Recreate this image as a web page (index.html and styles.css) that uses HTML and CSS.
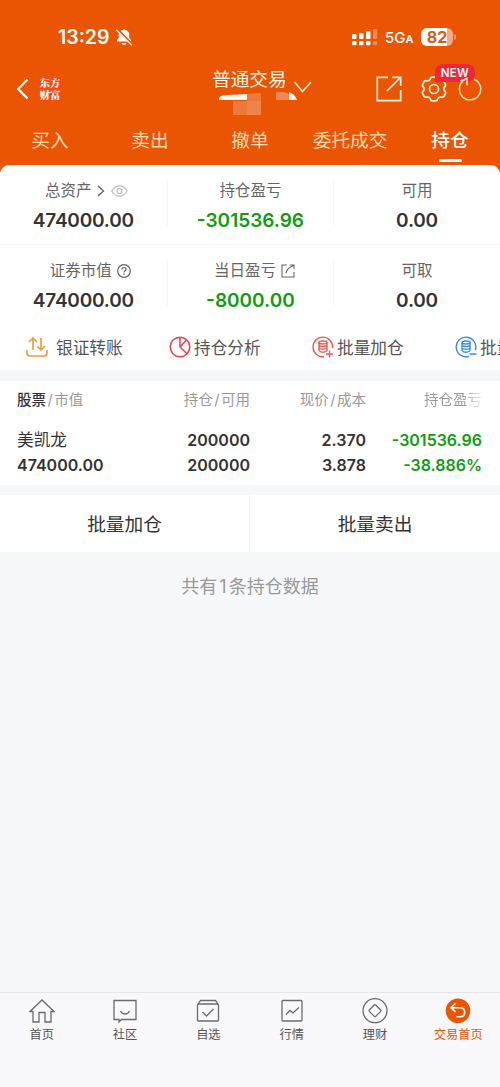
FILE: index.html
```html
<!DOCTYPE html>
<html lang="zh-CN">
<head>
<meta charset="utf-8">
<title>普通交易</title>
<link rel="stylesheet" href="styles.css">
</head>
<body>
<div class="app">
  <header class="top">
    <div class="status">
      <span class="time">13:29</span>
      <svg class="bell" width="18" height="18" viewBox="0 0 18 18"><path d="M2 13.600V12l1.700-2.300V7A5 5 0 0 1 8 2Q9 .4 10.200 2a5 5 0 0 1 4 5v2.700l1.800 2.300v1.600zM6.400 15h5.200q-.5 2-2.600 2t-2.600-2z" fill="#fff"/><path d="M2.200 1.200l15 15.400" stroke="#ea5504" stroke-width="2.600"/><path d="M1.300 1.700l15.400 15.400" stroke="#fff" stroke-width="1.300"/></svg>
      <svg class="signal" width="26" height="18" viewBox="0 0 26 18" fill="#fff"><rect x="0" y="6" width="4.500" height="5" rx="1"/><rect x="7" y="5" width="4.500" height="6" rx="1"/><rect x="14" y="3" width="4.500" height="8" rx="1"/><rect x="21" y="1" width="4.200" height="10" rx="1" opacity=".3"/><rect x="0" y="13" width="4.500" height="4.300" rx="1"/><rect x="7" y="13" width="4.500" height="4.300" rx="1"/><rect x="14" y="13" width="4.500" height="4.300" rx="1"/><rect x="21" y="13" width="4.200" height="4.300" rx="1" opacity=".3"/></svg>
      <span class="net">5G<small>A</small></span>
      <span class="battery">82</span><i class="battery-tip"></i>
    </div>
    <div class="bar">
      <svg class="back" width="14" height="22" viewBox="0 0 14 22"><path d="M11.500 1.500L2.200 11l9.300 9.500" fill="none" stroke="#fff" stroke-width="2.300"/></svg>
      <span class="logo"><span>东方</span><span>财富</span></span>
      <div class="title">
        <span>普通交易</span>
        <svg class="caret" width="20" height="14" viewBox="0 0 20 14"><path d="M1.500 2L9.500 11.500 18 2" fill="none" stroke="#ffe9d4" stroke-width="1.500"/></svg>
        <svg class="account" width="80" height="28" viewBox="0 0 80 28"><path d="M0 8Q-1 3 9 3L28 2v6z" fill="#fff8ee"/><path d="M28 2l14-1v22H28zM14 9h14v14H14z" fill="#ee7a3a"/><path d="M28 9h14v14H28z" fill="#f0834a"/><path d="M57 8V0h7q4 0 7 3v5z" fill="#f18752"/><path d="M70 0q6 2 8 8h-8z" fill="#fff2e3"/></svg>
      </div>
      <svg class="share" width="26" height="26" viewBox="0 0 26 26" fill="none" stroke="#fff0dc" stroke-width="1.700"><path d="M12 1.300H1.300v23.400h23.400V14M11 15L24 2M16 1.300h8.700V10"/></svg>
      <div class="gear">
        <svg width="26" height="26" viewBox="0 0 26 26" fill="none" stroke="#fff0dc" stroke-width="1.700"><path d="M9 3.600Q9.600 1.200 11 1.200h4Q16.400 1.200 17 3.600q.6 1.500 3.100 1.200 2-.4 2.900 1l1.400 2.700q.7 1.300-.8 2.600-1.400 1.900 0 3.800 1.500 1.300.8 2.600L23 20.200q-.9 1.400-2.900 1-2.500-.3-3.100 1.200-.6 2.400-2 2.400h-4q-1.400 0-2-2.400-.6-1.500-3.100-1.200-2 .4-2.900-1l-1.400-2.700q-.7-1.300.8-2.600 1.400-1.900 0-3.800-1.500-1.300-.8-2.600L3 5.800q.9-1.400 2.900-1Q8.400 5.100 9 3.600z"/><circle cx="13" cy="13" r="4.500"/></svg>
        <span class="new">NEW</span>
      </div>
      <svg class="refresh" width="24" height="26" viewBox="0 0 24 26" fill="none" stroke="#ffdcae" stroke-width="1.500"><path d="M16 3.200a10.700 10.700 0 1 1-9 .5M2.500 5L9 2.300v7"/></svg>
    </div>
    <nav class="tabs"><span>买入</span><span>卖出</span><span>撤单</span><span>委托成交</span><span class="on">持仓</span></nav>
  </header>

  <section class="assets">
    <div class="stats">
      <div class="stat"><div class="label first">总资产
        <svg width="8" height="12" viewBox="0 0 8 12"><path d="M1 1l5.500 5L1 11" fill="none" stroke="#666" stroke-width="1.400"/></svg>
        <svg class="eye" width="17" height="12" viewBox="0 0 17 12" fill="none" stroke="#bbb" stroke-width="1.200"><path d="M.8 6Q4 .8 8.500.8T16.200 6Q13 11.200 8.500 11.200T.8 6z"/><circle cx="8.500" cy="6" r="2.500"/></svg></div><b>474000.00</b></div>
      <div class="stat"><div class="label">持仓盈亏</div><b class="green">-301536.96</b></div>
      <div class="stat"><div class="label">可用</div><b>0.00</b></div>
    </div>
    <div class="stats">
      <div class="stat"><div class="label help">证券市值
        <svg width="14" height="14" viewBox="0 0 14 14" fill="none" stroke="#666" stroke-width="1.200"><circle cx="7" cy="7" r="6.300"/><path d="M4.900 5.500Q4.900 3.500 7 3.500t2.100 1.800Q9.100 6.300 7.900 6.900 7 7.400 7 8.400M7 9.600v1.300"/></svg></div><b>474000.00</b></div>
      <div class="stat"><div class="label today">当日盈亏
        <svg class="out" width="14" height="14" viewBox="0 0 14 14" fill="none" stroke="#666" stroke-width="1.100"><path d="M6 1H1v12h12V8M5 9.200Q5.500 4.500 12.500 1.500M8.800 1H13v4.300"/></svg></div><b class="green">-8000.00</b></div>
      <div class="stat"><div class="label">可取</div><b>0.00</b></div>
    </div>
    <div class="tools">
      <div class="tool"><svg class="transfer" width="22" height="22" viewBox="0 0 22 22" fill="none" stroke="#e9a13c" stroke-width="1.700"><path d="M7 14V2M3 6l4-4 4 4M15 2v12M11.500 10.500L15 14l4-4M1 14v3q0 3 3 3h14q3 0 3-3v-3"/></svg>银证转账</div>
      <div class="tool"><svg width="22" height="22" viewBox="0 0 22 22" fill="none" stroke="#e8414f" stroke-width="1.500"><circle cx="11" cy="11" r="9.800"/><path d="M11 1.200V11l7 6.800M11 11l6.500-7"/></svg>持仓分析</div>
      <div class="tool"><svg width="22" height="22" viewBox="0 0 22 22" fill="none" stroke="#e95c55" stroke-width="1.400"><path d="M12 20.700A9.800 9.800 0 1 1 20.600 12"/><ellipse cx="11" cy="6.500" rx="4" ry="1.500"/><path d="M7 6.500v8q1 1.800 4 1.800t4-1.800v-8M7 9q1 1.500 4 1.500T15 9M7 11.800q1 1.500 4 1.500t4-1.500M14 18h7M17.500 14.500v7"/></svg>批量加仓</div>
      <div class="tool"><svg width="22" height="22" viewBox="0 0 22 22" fill="none" stroke="#378ee5" stroke-width="1.400"><path d="M14 20.300A9.800 9.800 0 1 1 20.300 14"/><ellipse cx="11" cy="6.500" rx="4" ry="1.500"/><path d="M7 6.500v8q1 1.800 4 1.800t4-1.800v-8M7 9q1 1.500 4 1.500T15 9M7 11.800q1 1.500 4 1.500t4-1.500M14.500 18h7"/></svg>批量卖出</div>
    </div>
  </section>

  <section class="holdings">
    <div class="row head"><span><em>股票</em><i>/</i>市值</span><span>持仓<i>/</i>可用</span><span>现价<i>/</i>成本</span><span class="fade">持仓盈亏</span></div>
    <div class="row"><span class="name">美凯龙</span><span>200000</span><span>2.370</span><span class="green">-301536.96</span></div>
    <div class="row"><span>474000.00</span><span>200000</span><span>3.878</span><span class="green">-38.886%</span></div>
  </section>

  <section class="actions"><span>批量加仓</span><span>批量卖出</span></section>
  <p class="count">共有<span>1</span>条持仓数据</p>

  <nav class="bottom">
    <div><svg width="26" height="26" viewBox="0 0 26 26"><path d="M1 13.500L13 2l12 11.500h-3V24h-6v-9.500h-6V24H4V13.500z"/></svg>首页</div>
    <div><svg width="26" height="26" viewBox="0 0 26 26"><path d="M2 2.500h22v19H9.500L7 24v-2.500H2zM8.500 13q1.500 3 4.500 3t4.500-3"/></svg>社区</div>
    <div><svg width="26" height="26" viewBox="0 0 26 26"><rect x="2.500" y="6" width="21" height="17" rx="1"/><path d="M2.500 7l3-4.500h15l3 4.500M7.500 14l4 4 7-7"/></svg>自选</div>
    <div><svg width="26" height="26" viewBox="0 0 26 26"><rect x="3" y="2.500" width="20" height="20.500" rx="1"/><path d="M7 16.500l4-4 3 2.500 6-5.500"/></svg>行情</div>
    <div><svg width="26" height="26" viewBox="0 0 26 26"><circle cx="13" cy="12.700" r="12"/><rect x="8.500" y="8.200" width="9" height="9" rx="1" transform="rotate(45 13 12.700)"/></svg>理财</div>
    <div class="on"><svg width="26" height="26" viewBox="0 0 26 26"><circle cx="13" cy="12.700" r="12.300" fill="#ea5504" stroke="none"/><path d="M10.500 5.500L6 9.700l4.500 4.200M6 9.700H15q4.700 0 4.700 4.500T15 18.700H11.500" stroke="#fff" stroke-width="1.600"/></svg>交易首页</div>
  </nav>
</div>
</body>
</html>
```

FILE: styles.css
```css
* { box-sizing: border-box; }
body { margin: 0; background: #f6f7f9; font-family: Inter, "Noto Sans CJK SC", sans-serif; color: #333; }
svg { display: block; flex: none; }
i, em { font-style: normal; }
.app { width: 500px; height: 1087px; display: flex; flex-direction: column; overflow: hidden; }
.top { height: 175px; flex: none; background: #ea5504; color: #fff; }

.status { height: 60px; padding: 14px 0 0 58px; display: flex; align-items: center; }
.time { width: 54px; font-size: 19.500px; font-weight: 600; line-height: 20px; white-space: nowrap; }
.bell { margin-left: 3px; }
.signal { margin-left: 219px; }
.net { width: 31px; margin-left: 7px; font-size: 15px; font-weight: 500; white-space: nowrap; }
.net small { font-size: 11px; font-weight: 600; }
.battery { width: 32px; height: 18px; margin-left: 5px; border-radius: 6px; background: linear-gradient(90deg, #fff 82%, #f5aa82 82%); color: #d85a16; font-size: 16px; font-weight: 700; line-height: 18px; text-align: center; }
.battery-tip { width: 2px; height: 6px; margin-left: 1px; border-radius: 0 2px 2px 0; background: #f28d57; }

.bar { height: 58px; padding-left: 16px; display: flex; align-items: center; }
.logo { width: 26px; height: 26px; margin-left: 7px; border-radius: 5px; background: #f64b13; display: flex; flex-direction: column; align-items: center; justify-content: center; font: 900 10.500px/12px "Noto Serif CJK SC", "Noto Sans CJK SC", sans-serif; }
.title { position: relative; width: 106px; margin-left: 149px; display: flex; align-items: center; font-size: 18.700px; line-height: 26px; color: #fff4e5; padding-bottom: 18px; white-space: nowrap; }
.caret { margin: 14px 0 0 6px; }
.account { position: absolute; left: 7px; top: 26px; }
.share { margin-left: 58px; }
.gear { position: relative; margin-left: 19px; }
.new { position: absolute; left: 14px; top: -12px; width: 40px; height: 18px; border-radius: 8px 8px 8px 0; background: #ed2836; font-size: 11.500px; font-weight: 600; line-height: 18px; text-align: center; letter-spacing: .3px; }
.refresh { margin-left: 11px; position: relative; }

.tabs { height: 47px; display: flex; }
.tabs span { width: 100px; text-align: center; font-size: 18.700px; line-height: 46px; color: #ffd9b0; }
.tabs .on { color: #fff; font-weight: 500; display: flex; flex-direction: column; align-items: center; }
.tabs .on::after { content: ""; width: 23px; height: 3px; border-radius: 2px; background: #fff; margin-top: -5px; }

.assets { height: 205px; flex: none; margin-top: -10px; background: #fff; border-radius: 9px 9px 0 0; overflow: hidden; }
.stats { height: 80px; padding-top: 15px; display: flex; border-bottom: 1px solid #f4f4f6; }
.stats + .stats { border-bottom: 0; }
.stat { width: 166.600px; height: 46px; text-align: center; border-left: 1px solid #f5f5f7; }
.stat:first-child { border: 0; }
.label { height: 22px; display: flex; align-items: center; justify-content: center; gap: 5px; font-size: 15.500px; line-height: 22px; color: #666; }
.label.first { padding-left: 6px; }
.label .eye { margin-left: 1px; }
.label.help { padding-left: 14px; }
.label.today { padding-left: 8px; }
.stat b { display: block; margin-top: 7px; font-size: 19px; line-height: 24px; font-weight: 600; letter-spacing: -.2px; }
.green, .stat .green { color: #129b12; letter-spacing: 0; }
.tools { height: 43px; padding-left: 26px; display: flex; }
.tool { width: 143px; flex: none; display: flex; align-items: center; gap: 3px; font-size: 16.700px; color: #555; }
.tool .transfer { margin-right: 5px; }

.holdings { height: 104px; flex: none; margin-top: 11px; background: #fff; padding: 6px 18px 0 17px; }
.row { display: grid; grid-template-columns: 116px 117px 116px 116px; height: 25px; line-height: 25px; font-size: 16px; font-weight: 600; text-align: right; }
.row span { white-space: nowrap; }
.row span:first-child { text-align: left; }
.row.head { height: 41px; font-size: 14.500px; font-weight: 400; color: #999; }
.head i { margin: 0 1.500px; }
.head em { color: #333; font-weight: 500; }
.row .name { font-size: 16.700px; font-weight: 400; }
.fade { -webkit-mask-image: linear-gradient(90deg, #000 84%, rgba(0,0,0,.15)); mask-image: linear-gradient(90deg, #000 84%, rgba(0,0,0,.15)); }

.actions { height: 57px; flex: none; margin-top: 10px; background: #fff; display: flex; }
.actions span { width: 249px; text-align: center; font-size: 18.700px; line-height: 59px; }
.actions span + span { width: 251px; border-left: 1px solid #eef1f6; }
.count { margin: 21px 0 0; text-align: center; font-size: 18px; line-height: 28px; color: #999; }
.count span { margin: 0 2px; }

.bottom { height: 95px; margin-top: auto; padding-top: 5px; display: flex; background: #f8f8fa; border-top: 1px solid #e4e5e8; }
.bottom div { width: 83.330px; display: flex; flex-direction: column; align-items: center; font-size: 12.200px; line-height: 20px; color: #555; }
.bottom svg { margin-bottom: 1px; fill: none; stroke: #6b6b6b; stroke-width: 1.300; }
.bottom .on { color: #ea5504; }
```
